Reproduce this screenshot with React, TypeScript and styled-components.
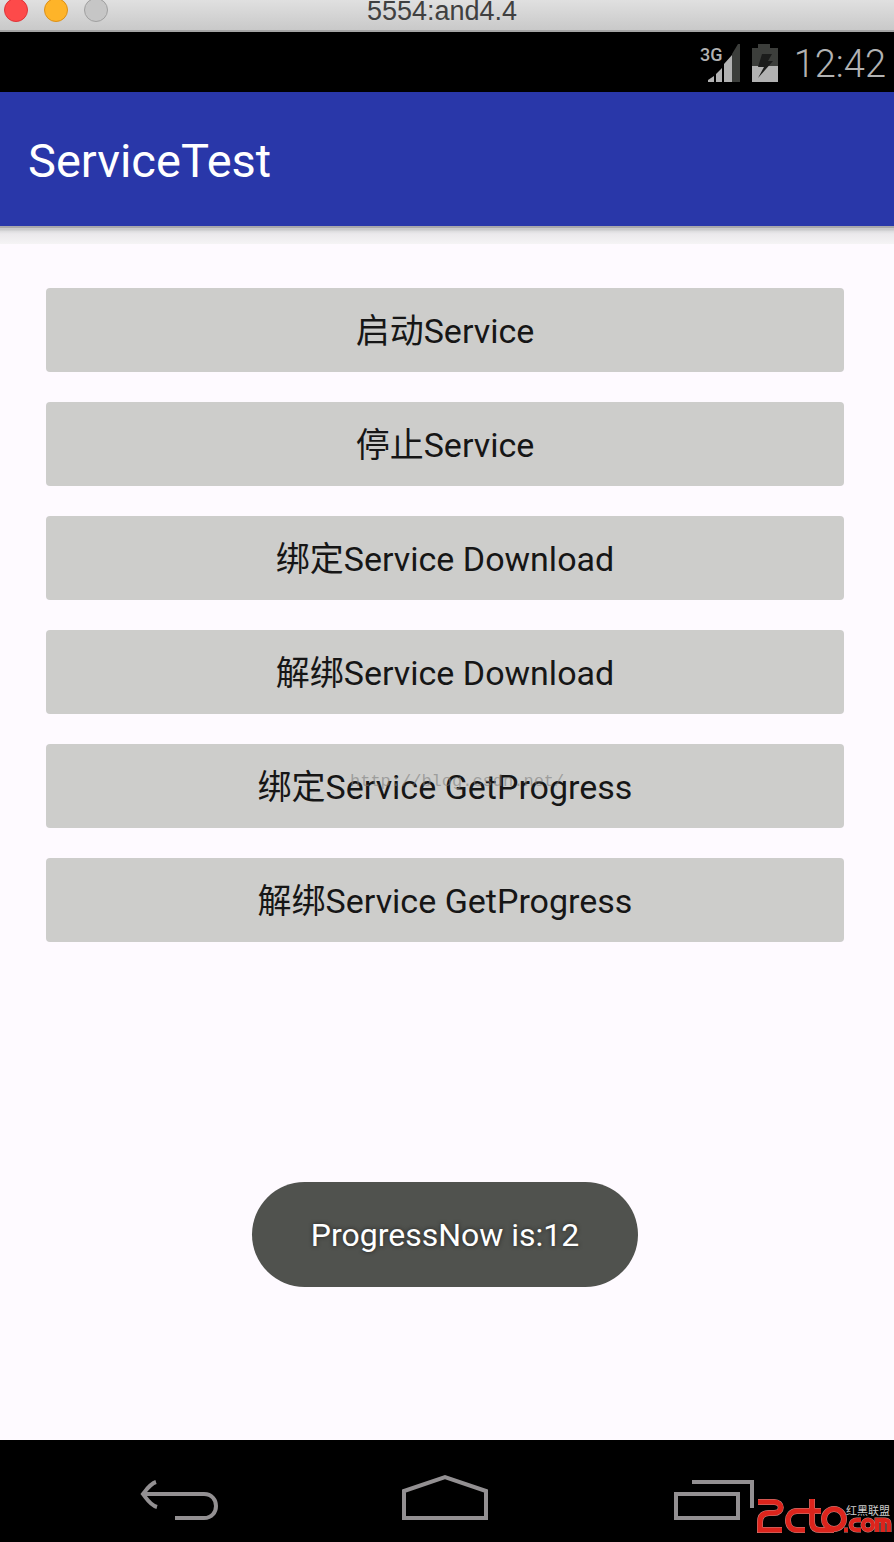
import React from "react";
import styled, { createGlobalStyle } from "styled-components";

const GlobalStyle = createGlobalStyle`
  * { box-sizing: border-box; }
  body { margin: 0; font-family: Roboto, "Noto Sans CJK SC", sans-serif; }
`;

const Screen = styled.div`
  display: flex;
  flex-direction: column;
  min-height: 100vh;
  background: #fefaff;
`;

const TitleBar = styled.header`
  position: relative;
  display: flex;
  flex-shrink: 0;
  justify-content: center;
  height: 32px;
  padding-right: 10px;
  background: linear-gradient(#e0e0e0, #c9c9c9);
  border-bottom: 2px solid #a5a5a5;
  color: #404040;
  font-family: "Liberation Sans", sans-serif;
  font-size: 27px;
  line-height: 22px;
`;

const Lights = styled.div`
  position: absolute;
  top: -2px;
  left: 4px;
  display: flex;
  gap: 16px;
`;

const Light = styled.button<{ $fill: string; $edge: string }>`
  width: 24px;
  height: 24px;
  padding: 0;
  border: 1px solid ${(p) => p.$edge};
  border-radius: 50%;
  background: ${(p) => p.$fill};
`;

const StatusBar = styled.div`
  display: flex;
  flex-shrink: 0;
  justify-content: flex-end;
  align-items: center;
  height: 60px;
  padding-right: 8px;
  background: #000;
  color: #b2b2b2;
`;

const Clock = styled.time`
  padding-top: 4px;
  width: 104px;
  text-align: right;
  font-size: 38px;
  font-weight: 300;
  line-height: 60px;
`;

const AppBar = styled.div`
  position: relative;
  display: flex;
  flex-shrink: 0;
  align-items: center;
  height: 134px;
  padding: 4px 28px 0;
  background: #2937a9;
  color: #fff;
  &::after {
    content: "";
    position: absolute;
    top: 100%;
    left: 0;
    right: 0;
    height: 18px;
    background: linear-gradient(#a8a8ac 0 2px, #c9c9cb 2px 4px, #dcdcde 5px, #ebe9ec 8px, #f5f4f5 18px);
  }
`;

const AppTitle = styled.h1`
  margin: 0;
  font-size: 47px;
  font-weight: 400;
  line-height: 56px;
`;

const Content = styled.main`
  position: relative;
  flex: 1;
  display: flex;
  flex-direction: column;
  gap: 30px;
  padding: 62px 50px 300px 46px;
`;

const ServiceButton = styled.button`
  position: relative;
  flex-shrink: 0;
  height: 84px;
  padding: 2px 0 0;
  border: 0;
  border-radius: 4px;
  background: #cdcdcb;
  color: #161616;
  font: 400 34px/40px Roboto, "Noto Sans CJK SC", sans-serif;
`;

const Watermark = styled.span`
  position: absolute;
  top: 28px;
  left: 304px;
  color: rgba(125, 125, 125, 0.6);
  font: 17px/20px "Liberation Mono", monospace;
`;

const Toast = styled.div`
  position: absolute;
  bottom: 153px;
  left: 0;
  right: 4px;
  display: flex;
  justify-content: center;
`;

const ToastText = styled.div`
  padding: 2px 59px 0;
  border-radius: 53px;
  background: #50524e;
  color: #fff;
  font-size: 32px;
  line-height: 103px;
  text-shadow: 0 0 4px #222;
`;

const NavBar = styled.nav`
  position: relative;
  display: flex;
  flex-shrink: 0;
  justify-content: center;
  gap: 180px;
  height: 102px;
  padding: 32px 4px 0 0;
  background: #000;
`;

const NavButton = styled.button`
  width: 88px;
  height: 52px;
  padding: 0;
  border: 0;
  background: none;
`;

const Brand = styled.div`
  position: absolute;
  right: 0;
  bottom: 4px;
  line-height: 0;
`;

const lights = [
  { name: "Close", fill: "#fd4a4a", edge: "#df3439" },
  { name: "Minimize", fill: "#feb429", edge: "#dc9018" },
  { name: "Zoom", fill: "#c6c6c6", edge: "#a0a0a0" },
];

const actions = [
  { label: "启动Service" },
  { label: "停止Service" },
  { label: "绑定Service Download" },
  { label: "解绑Service Download" },
  { label: "绑定Service GetProgress", mark: "http://blog.csdn.net/" },
  { label: "解绑Service GetProgress" },
];

const StatusIcons = () => (
  <svg width="82" height="44" viewBox="0 0 82 44" aria-hidden="true">
    <text x="0" y="21" fontSize="18" fontWeight="500" fill="#b2b2b2">3G</text>
    <path d="M8 42V40L14 36V42ZM16 42V34L22 28V42ZM24 42V24L32 15V42Z" fill="#b2b2b2" />
    <path d="M32 42V14L38 4H40V42Z" fill="#3c3e3b" />
    <path d="M52 26V8H58V4H70V8H78V26Z" fill="#3c3e3b" />
    <path d="M52 26H78V42H52Z" fill="#b2b2b2" />
    <path d="M62 14H72L68 21H73L58 38L64 27H58Z" fill="#1c1d1c" />
  </svg>
);

const BackIcon = () => (
  <svg width="88" height="52" viewBox="0 0 88 52" fill="none" stroke="#939092" strokeWidth="4">
    <path d="M9 22H71C87 22 87 46 71 46H42" />
    <path d="M23 10C17 12 14 17 10 22C14 27 17 33 24 35" />
  </svg>
);

const HomeIcon = () => (
  <svg width="88" height="52" viewBox="0 0 88 52" fill="none" stroke="#939092" strokeWidth="4">
    <path d="M3 46V19L44 5L85 19V46Z" />
  </svg>
);

const RecentIcon = () => (
  <svg width="88" height="52" viewBox="0 0 88 52" fill="none" stroke="#939092" strokeWidth="4">
    <path d="M7 22H69V46H7Z" />
    <path d="M23 10H83V36" />
  </svg>
);

const BrandLogo = () => (
  <svg width="140" height="40" viewBox="0 0 140 40" role="img" aria-label="2cto.com" fill="none">
    {[
      { color: "#c98a86", big: 6, small: 5 },
      { color: "#dc241c", big: 5, small: 4 },
    ].map((s) => (
      <g key={s.color} stroke={s.color}>
        <path strokeWidth={s.big} d="M4 4H20C29 4 29 15 20 15H15Q6 15 6 24V32H28" />
        <path strokeWidth={s.big} d="M67 13H43C31 13 31 32 43 32H51M58 1V24Q58 32 66 32H80" />
        <circle strokeWidth={s.big} cx="80" cy="21" r="10" />
        <path strokeWidth={s.small} d="M90 32H94M107 22H103C95 22 95 32 103 32H107M123 34V22H131Q135 22 135 26V34M129 22V34" />
        <circle strokeWidth={s.small} cx="114" cy="27" r="5" />
      </g>
    ))}
    <text x="92" y="17" fontSize="11" fill="#ccc">红黑联盟</text>
  </svg>
);

export default function App() {
  return (
    <Screen>
      <GlobalStyle />
      <TitleBar>
        <Lights>
          {lights.map((l) => (
            <Light key={l.name} aria-label={l.name} $fill={l.fill} $edge={l.edge} />
          ))}
        </Lights>
        5554:and4.4
      </TitleBar>
      <StatusBar>
        <StatusIcons />
        <Clock>12:42</Clock>
      </StatusBar>
      <AppBar>
        <AppTitle>ServiceTest</AppTitle>
      </AppBar>
      <Content>
        {actions.map(({ label, mark }) => (
          <ServiceButton key={label}>
            {label}
            {mark && <Watermark>{mark}</Watermark>}
          </ServiceButton>
        ))}
        <Toast role="status">
          <ToastText>ProgressNow is:12</ToastText>
        </Toast>
      </Content>
      <NavBar>
        <NavButton aria-label="Back"><BackIcon /></NavButton>
        <NavButton aria-label="Home"><HomeIcon /></NavButton>
        <NavButton aria-label="Recent apps"><RecentIcon /></NavButton>
        <Brand><BrandLogo /></Brand>
      </NavBar>
    </Screen>
  );
}
